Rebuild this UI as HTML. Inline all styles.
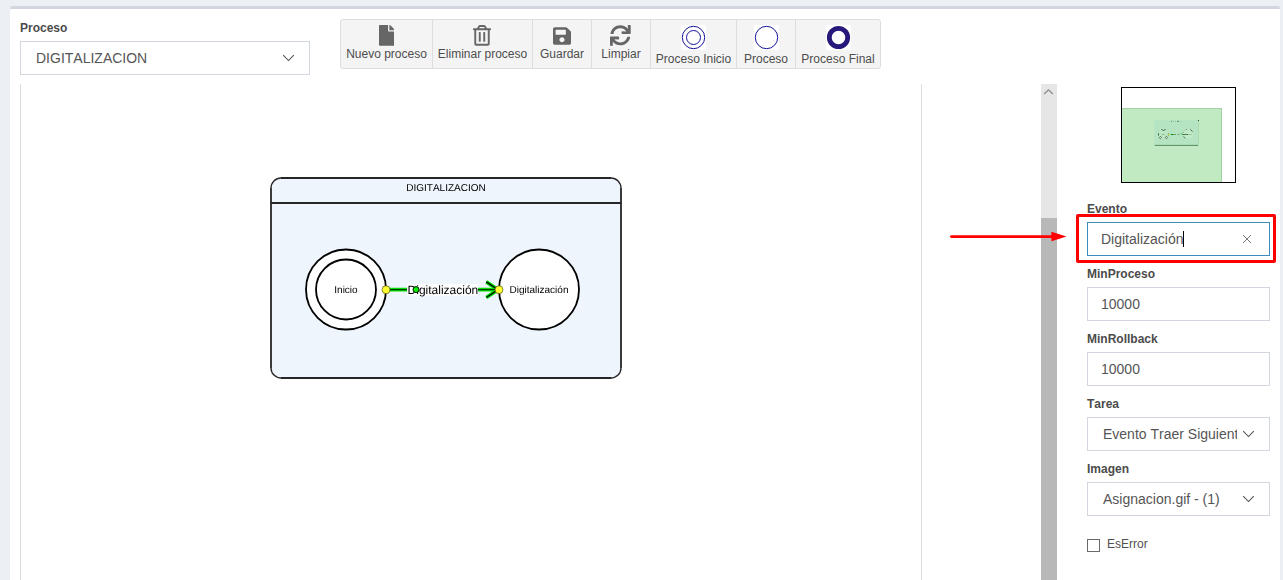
<!DOCTYPE html>
<html>
<head>
<meta charset="utf-8">
<style>
*{box-sizing:border-box;margin:0;padding:0}
html,body{width:1283px;height:580px;overflow:hidden}
body{font-kerning:none;background:#ecf0f5;font-family:"Liberation Sans",sans-serif;color:#333;position:relative}
.abs{position:absolute}
#card{left:10px;top:6px;width:1270px;height:580px;background:#fff;border-top:3px solid #d2d6de;border-radius:3px 3px 0 0;box-shadow:0 1px 1px rgba(0,0,0,.1)}
.lbl{font-weight:bold;font-size:12px;color:#4b4b4b;line-height:14px;white-space:nowrap}
.inp{border:1px solid #d2d6de;background:#fff;font-size:14px;color:#555;line-height:32px;height:34px;white-space:nowrap;overflow:hidden}
#tb{left:340px;top:19px;width:541px;height:50px;background:#f4f4f4;border:1px solid #ddd;border-radius:3px}
.tbtn{position:absolute;top:0;height:48px;border-right:1px solid #ddd;font-size:12px;color:#4d4d4d;text-align:center;white-space:nowrap}
.tbtn span{position:absolute;left:0;right:0;line-height:14px}
.tbtn svg{position:absolute}
</style>
</head>
<body>
<div id="card" class="abs"></div>

<!-- Proceso -->
<div class="abs lbl" style="left:20px;top:21px">Proceso</div>
<div class="abs inp" style="left:20px;top:41px;width:290px;padding-left:15px">DIGITALIZACION</div>
<svg class="abs" style="left:282px;top:54px" width="13" height="8" viewBox="0 0 13 8"><path d="M1.2 1.2 L6.5 6.5 L11.8 1.2" fill="none" stroke="#505050" stroke-width="1.050"/></svg>

<!-- Toolbar -->
<div id="tb" class="abs">
  <div class="tbtn" style="left:0;width:92px"><svg style="left:37.800px;top:5px" width="15.600" height="20.800" preserveAspectRatio="none" viewBox="0 0 384 512"><path fill="#666" d="M224 136V0H24C10.7 0 0 10.7 0 24v464c0 13.3 10.7 24 24 24h336c13.3 0 24-10.7 24-24V160H248c-13.2 0-24-10.8-24-24zm160-14.1v6.1H256V0h6.1c6.4 0 12.5 2.500 17 7l97.900 98c4.500 4.500 7 10.600 7 16.900z"/></svg><span style="top:27px">Nuevo proceso</span></div>
  <div class="tbtn" style="left:92px;width:100px"><svg style="left:40.400px;top:5px" width="18" height="20.700" preserveAspectRatio="none" viewBox="0 0 448 512"><path fill="#666" d="M268 416h24a12 12 0 0 0 12-12V188a12 12 0 0 0-12-12h-24a12 12 0 0 0-12 12v216a12 12 0 0 0 12 12zM432 80h-82.410l-34-56.700A48 48 0 0 0 274.410 0H173.590a48 48 0 0 0-41.160 23.300L98.410 80H16A16 16 0 0 0 0 96v16a16 16 0 0 0 16 16h16v336a48 48 0 0 0 48 48h288a48 48 0 0 0 48-48V128h16a16 16 0 0 0 16-16V96a16 16 0 0 0-16-16zM171.840 50.910A6 6 0 0 1 177 48h94a6 6 0 0 1 5.150 2.910L293.610 80H154.390zM368 464H80V128h288zm-212-48h24a12 12 0 0 0 12-12V188a12 12 0 0 0-12-12h-24a12 12 0 0 0-12 12v216a12 12 0 0 0 12 12z"/></svg><span style="top:27px">Eliminar proceso</span></div>
  <div class="tbtn" style="left:192px;width:59px"><svg style="left:19.900px;top:5.500px" width="18" height="20" preserveAspectRatio="none" viewBox="0 0 448 512"><path fill="#666" d="M433.941 129.941l-83.882-83.882A48 48 0 0 0 316.118 32H48C21.490 32 0 53.490 0 80v352c0 26.510 21.490 48 48 48h352c26.510 0 48-21.490 48-48V163.882a48 48 0 0 0-14.059-33.941zM224 416c-35.346 0-64-28.654-64-64 0-35.346 28.654-64 64-64s64 28.654 64 64c0 35.346-28.654 64-64 64zm96-304.520V212c0 6.627-5.373 12-12 12H76c-6.627 0-12-5.373-12-12V108c0-6.627 5.373-12 12-12h228.520c3.183 0 6.235 1.264 8.485 3.515l3.480 3.480A11.996 11.996 0 0 1 320 111.480z"/></svg><span style="top:27px">Guardar</span></div>
  <div class="tbtn" style="left:251px;width:59px"><svg style="left:18.300px;top:5px" width="20.700" height="20.700" preserveAspectRatio="none" viewBox="0 0 512 512"><path fill="#666" d="M440.650 12.570l4 82.770A247.160 247.160 0 0 0 255.830 8C134.730 8 33.910 94.920 12.290 209.820A12 12 0 0 0 24.090 224h49.050a12 12 0 0 0 11.670-9.260 175.910 175.910 0 0 1 317-56.940l-101.460-4.860a12 12 0 0 0-12.570 12v47.410a12 12 0 0 0 12 12H500a12 12 0 0 0 12-12V12a12 12 0 0 0-12-12h-47.370a12 12 0 0 0-11.980 12.570zM255.830 432a175.610 175.610 0 0 1-146-77.800l101.800 4.870a12 12 0 0 0 12.570-12v-47.400a12 12 0 0 0-12-12H12a12 12 0 0 0-12 12V500a12 12 0 0 0 12 12h47.350a12 12 0 0 0 12-12.600l-4.150-82.570A247.170 247.170 0 0 0 255.830 504c121.110 0 221.930-86.920 243.550-201.820a12 12 0 0 0-11.800-14.180h-49.050a12 12 0 0 0-11.670 9.260A175.860 175.860 0 0 1 255.830 432z"/></svg><span style="top:27px">Limpiar</span></div>
  <div class="tbtn" style="left:310px;width:86px"><svg style="left:30px;top:5px" width="25" height="25" viewBox="0 0 25 25"><rect width="25" height="25" fill="#fff"/><circle cx="12.500" cy="12.500" r="11.200" fill="none" stroke="#14149a" stroke-width="1"/><circle cx="12.500" cy="12.500" r="7" fill="none" stroke="#14149a" stroke-width="1"/></svg><span style="top:32px">Proceso Inicio</span></div>
  <div class="tbtn" style="left:396px;width:59px"><svg style="left:17px;top:5px" width="25" height="25" viewBox="0 0 25 25"><rect width="25" height="25" fill="#fff"/><circle cx="12.500" cy="12.500" r="11.200" fill="none" stroke="#14149a" stroke-width="1"/></svg><span style="top:32px">Proceso</span></div>
  <div class="tbtn" style="left:455px;width:84px;border-right:none"><svg style="left:30px;top:5px" width="25" height="25" viewBox="0 0 25 25"><rect width="25" height="25" fill="#fff"/><circle cx="12.500" cy="12.500" r="9.200" fill="none" stroke="#27197b" stroke-width="4.800"/></svg><span style="top:32px">Proceso Final</span></div>
</div>

<!-- Diagram area -->
<div class="abs" style="left:20px;top:84px;width:902px;height:500px;border:1px solid #ddd;border-top:none;background:#fff"></div>


<!-- Diagram -->
<svg class="abs" style="left:0;top:84px;will-change:transform;opacity:.999;text-rendering:geometricPrecision" width="922" height="496" viewBox="0 84 922 496" font-family="Liberation Sans, sans-serif">
  <rect x="271" y="178" width="350" height="200" rx="10" ry="10" fill="#eef5fd"/>
  <path d="M281 178 H611 M621 188 V368 M611 378 H281 M271 368 V188" fill="none" stroke="#262626" stroke-width="1.800"/>
  <path d="M271 188 A10 10 0 0 1 281 178 M611 178 A10 10 0 0 1 621 188 M621 368 A10 10 0 0 1 611 378 M281 378 A10 10 0 0 1 271 368" fill="none" stroke="#2a2a2a" stroke-width="1.400"/>
  <line x1="271" y1="203" x2="621" y2="203" stroke="#262626" stroke-width="1.800"/>
  <text x="446" y="191" font-size="10" text-anchor="middle" fill="#000">DIGITALIZACION</text>
  <circle cx="346" cy="289.500" r="40" fill="#fff" stroke="#000" stroke-width="1.800"/>
  <circle cx="346" cy="289.500" r="30" fill="#fff" stroke="#000" stroke-width="1.800"/>
  <text x="346" y="293" font-size="10" text-anchor="middle" fill="#000">Inicio</text>
  <circle cx="539" cy="289.500" r="40" fill="#fff" stroke="#000" stroke-width="1.800"/>
  <text x="539" y="293" font-size="10" text-anchor="middle" fill="#000">Digitalización</text>
  <!-- edge glow -->
  <g fill="none" stroke="#00e000" stroke-width="3.800" stroke-linecap="butt">
    <line x1="386" y1="289.700" x2="498" y2="289.700"/>
    <polyline points="486.300,281.900 498,289.700 486.300,297.500"/>
  </g>
  <g fill="none" stroke="#003c00" stroke-width="1.300">
    <line x1="386" y1="289.700" x2="498" y2="289.700"/>
    <polyline points="486.300,281.900 498,289.700 486.300,297.500" stroke="#000"/>
  </g>
  <rect x="407" y="284" width="71" height="11.500" fill="#fff"/>
  <text x="407.600" y="294" font-size="12" fill="#000">Digitalización</text>
  <circle cx="416" cy="289.600" r="3" fill="#00ee00" stroke="#000" stroke-width="0.9"/>
  <circle cx="386" cy="289.750" r="4" fill="#ffff33" stroke="#333300" stroke-width="0.600"/>
  <circle cx="499" cy="289.750" r="4" fill="#ffff33" stroke="#333300" stroke-width="0.600"/>
</svg>

<!-- scrollbar -->
<div class="abs" style="left:1041px;top:84px;width:16px;height:500px;background:#e6e6e6"></div>
<div class="abs" style="left:1041px;top:218px;width:16px;height:370px;background:#b8b8b8"></div>
<svg class="abs" style="left:1043px;top:88px" width="12" height="8" viewBox="0 0 12 8"><path d="M1.2 6 L5.500 1.800 L9.800 6" fill="none" stroke="#8a8a8a" stroke-width="1.200"/></svg>


<!-- minimap -->
<div class="abs" style="left:1121px;top:87px;width:115px;height:96px;border:1px solid #000;background:#fff"></div>
<div class="abs" style="left:1122px;top:108px;width:100px;height:74px;background:#c1e9c2;border:1px solid #a2cfa4;border-left:none;border-bottom:none"></div>
<svg class="abs" style="left:1150px;top:116px" width="54" height="34" viewBox="1150 116 54 34">
  <rect x="1154.300" y="120" width="44.500" height="25.700" fill="#b5e4c2"/>
  <line x1="1154.800" y1="145.400" x2="1198" y2="145.400" stroke="#4d824f" stroke-width="0.900"/>
  <line x1="1198.500" y1="121" x2="1198.500" y2="145.600" stroke="#9fd3a8" stroke-width="0.600"/>
  <rect x="1198" y="120" width="1" height="1" fill="#2f4f2f"/>
  <g stroke-width="0.700" fill="none">
    <line x1="1171" y1="121.400" x2="1172" y2="121.400" stroke="#3d5f44"/>
    <line x1="1173.200" y1="121.400" x2="1174" y2="121.400" stroke="#7fa88a"/>
    <line x1="1175.200" y1="121.400" x2="1176" y2="121.400" stroke="#7fa88a"/>
    <line x1="1177" y1="121.400" x2="1179" y2="121.400" stroke="#3d5f44"/>
    <line x1="1180.200" y1="121.400" x2="1181" y2="121.400" stroke="#7fa88a"/>
  </g>
  <circle cx="1163.600" cy="134.400" r="5" fill="#bbe7c5"/>
  <circle cx="1187.900" cy="134.400" r="5" fill="#bfe9c7"/>
  <g fill="none" stroke="#1f2f1f" stroke-width="0.700">
    <path d="M1161.400 129.500 Q1163.500 131.400 1165.600 129.500"/>
    <line x1="1158.500" y1="133.200" x2="1158.500" y2="135.600"/>
    <path d="M1160.400 136.300 l1.200 1.200 l-1.200 1.200 l-1.200 -1.200 z" stroke-width="0.600" fill="#c9edd0"/>
    <path d="M1166.500 136.300 l1.200 1.200 l-1.200 1.200 l-1.200 -1.200 z" stroke-width="0.600" fill="#c9edd0"/>
    <line x1="1168.400" y1="133" x2="1168.400" y2="135.800" stroke="#4a5a3a" stroke-width="0.600"/>
    <line x1="1190.300" y1="129.500" x2="1192.600" y2="131.600"/>
    <line x1="1183.500" y1="136.400" x2="1185.600" y2="138.500" stroke-width="0.600"/>
    <line x1="1186.200" y1="129.500" x2="1186.900" y2="129.500"/>
    <line x1="1183.200" y1="132.500" x2="1183.800" y2="132.500" stroke="#4a6a4a"/>
    <line x1="1184.300" y1="130.300" x2="1184.900" y2="130.300" stroke="#8aaa8a"/>
  </g>
  <line x1="1161.900" y1="134.500" x2="1165" y2="134.500" stroke="#8fb596" stroke-width="0.800"/>
  <rect x="1163" y="139.200" width="0.800" height="0.600" fill="#9cc3a2"/>
  <rect x="1187.500" y="139.200" width="1.200" height="0.500" fill="#a8cfae"/>
  <rect x="1167.900" y="133.900" width="1.100" height="1.100" fill="#e6e020"/>
  <line x1="1169" y1="134.500" x2="1171" y2="134.500" stroke="#7fe08a" stroke-width="0.900"/>
  <line x1="1171" y1="134.500" x2="1173" y2="134.500" stroke="#0a8a10" stroke-width="1"/>
  <line x1="1173" y1="134.500" x2="1176" y2="134.500" stroke="#5f9a66" stroke-width="0.900"/>
  <line x1="1177.500" y1="134.500" x2="1179.500" y2="134.500" stroke="#6a9a70" stroke-width="0.900"/>
  <rect x="1180.900" y="132.900" width="1.100" height="1.100" fill="#2fe050"/>
  <line x1="1182" y1="134.500" x2="1188" y2="134.500" stroke="#3f6f46" stroke-width="0.900"/>
  <line x1="1188" y1="134.500" x2="1191.700" y2="134.500" stroke="#8fb896" stroke-width="0.800"/>
</svg>

<!-- right form -->
<div class="abs lbl" style="left:1087px;top:202px">Evento</div>
<div class="abs inp" style="left:1087px;top:222px;width:183px;padding-left:13px;border-color:#3c8dbc">Digitalización</div>
<div class="abs" style="left:1183px;top:231px;width:1px;height:16px;background:#000"></div>
<svg class="abs" style="left:1242px;top:234px" width="10" height="10" viewBox="0 0 10 10"><path d="M1 1 L9 9 M9 1 L1 9" stroke="#777" stroke-width="1" fill="none"/></svg>

<div class="abs lbl" style="left:1087px;top:267px">MinProceso</div>
<div class="abs inp" style="left:1087px;top:287px;width:183px;padding-left:13px">10000</div>

<div class="abs lbl" style="left:1087px;top:332px">MinRollback</div>
<div class="abs inp" style="left:1087px;top:352px;width:183px;padding-left:13px">10000</div>

<div class="abs lbl" style="left:1087px;top:397px">Tarea</div>
<div class="abs inp" style="left:1087px;top:417px;width:183px;padding-left:15px"><div style="width:134px;overflow:hidden">Evento Traer Siguiente</div></div>
<svg class="abs" style="left:1242px;top:430px" width="13" height="8" viewBox="0 0 13 8"><path d="M1.2 1.200 L6.500 6.500 L11.800 1.200" fill="none" stroke="#505050" stroke-width="1.050"/></svg>

<div class="abs lbl" style="left:1087px;top:462px">Imagen</div>
<div class="abs inp" style="left:1087px;top:482px;width:183px;padding-left:15px">Asignacion.gif - (1)</div>
<svg class="abs" style="left:1242px;top:495px" width="13" height="8" viewBox="0 0 13 8"><path d="M1.2 1.200 L6.500 6.500 L11.800 1.200" fill="none" stroke="#505050" stroke-width="1.050"/></svg>

<div class="abs" style="left:1087px;top:539px;width:13px;height:13px;border:1px solid #6a6a6a;background:#fff"></div>
<div class="abs" style="left:1107px;top:537px;font-size:12px;color:#505050;line-height:14px">EsError</div>

<!-- annotation -->
<div class="abs" style="left:1076px;top:214px;width:200px;height:49px;border:3px solid #f00;border-radius:2px"></div>
<svg class="abs" style="left:945px;top:228px" width="125" height="18" viewBox="945 228 125 18"><line x1="951.400" y1="236.600" x2="1053" y2="236.600" stroke="#f00" stroke-width="2.800" stroke-linecap="round"/><path d="M1051.400 231.800 L1066.500 236.600 L1051.400 241.200 Z" fill="#f00"/></svg>

</body>
</html>
